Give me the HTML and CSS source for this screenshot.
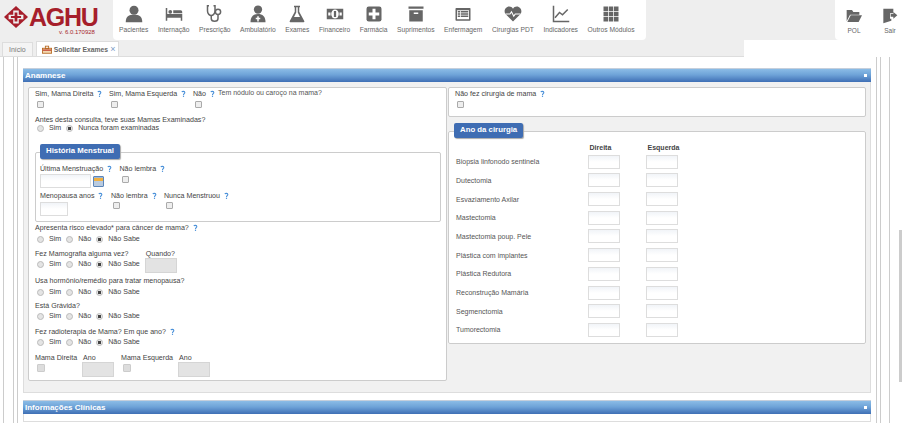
FILE: index.html
```html
<!DOCTYPE html>
<html lang="pt-BR">
<head>
    <meta charset="UTF-8">
    <title>AGHU - Solicitar Exames</title>
    <link rel="stylesheet" href="styles.css">
</head>
<body>
<svg class="sprites" width="0" height="0">
    <symbol id="help" viewBox="0 0 6 9"><path d="M1 2.2C1.6 1 4.6 1 4.6 2.6c0 1.300-1.600 1.400-1.600 3" fill="none" stroke="#4a90d9" stroke-width="1.300"/><rect x="2.300" y="6.500" width="1.400" height="1.500" fill="#4a90d9"/></symbol>
</svg>

<header class="topbar">
    <div class="logo">
        <div class="logo-row">
            <svg class="logo-cross" viewBox="0 0 28 26"><path d="M14 1 27 13 14 25 1 13Z" fill="#a61e2b"/><path d="M11 6h6v4.500h5v5h-5V20h-6v-4.500H6v-5h5Z" fill="#eee"/><path d="M12.500 8h3v4h4v2h-4v4h-3v-4h-4v-2h4Z" fill="#a61e2b"/></svg>
            <span class="logo-name">AGHU</span>
        </div>
        <div class="logo-version">v. 6.0.170928</div>
    </div>
    <nav class="menu">
        <a class="menu-item"><svg viewBox="0 0 24 24"><circle cx="12" cy="7" r="6"/><path d="M1 23c0-8 4-10 11-10s11 2 11 10Z"/></svg>Pacientes</a>
        <a class="menu-item"><svg viewBox="0 0 24 24"><path d="M1 4h2v8h20v9h-2v-4H3v4H1Z"/><circle cx="7" cy="9" r="2.500"/><path d="M11 7h10c1.500 0 2 1 2 4H11Z"/></svg>Internação</a>
        <a class="menu-item"><svg class="line" viewBox="0 0 24 24"><path d="M4 1H2v7c0 4 3 6 5 6s5-2 5-6V1h-2"/><path d="M7 14v4c0 5 9 5 9 0v-5"/><circle cx="16" cy="9" r="3.500"/></svg>Prescrição</a>
        <a class="menu-item"><svg viewBox="0 0 24 24"><circle cx="12" cy="6" r="5.500"/><path d="M2 23c0-8 4-11 10-11s10 3 10 11Z"/><path d="M11 15h2v2h2v2h-2v3h-2v-3H9v-2h2Z" fill="#fff"/></svg>Ambulatório</a>
        <a class="menu-item"><svg viewBox="0 0 24 24"><path d="M8 1h8v2h-1v6l7 13-1 1H3l-1-1 7-13V3H8Z"/><path d="M11 3h2v7l3 6H8l3-6Z" fill="#fff"/></svg>Exames</a>
        <a class="menu-item"><svg viewBox="0 0 24 24"><path d="M1 5h22v14H1Z"/><ellipse cx="12" cy="12" rx="5" ry="6" fill="#fff"/><rect x="10.500" y="8" width="3" height="8"/><rect x="3" y="10" width="3" height="4" fill="#fff"/><rect x="18" y="10" width="3" height="4" fill="#fff"/></svg>Financeiro</a>
        <a class="menu-item"><svg viewBox="0 0 24 24"><rect x="2" y="2" width="20" height="20" rx="3"/><path d="M10 5h4v5h5v4h-5v5h-4v-5H5v-4h5Z" fill="#fff"/></svg>Farmácia</a>
        <a class="menu-item"><svg viewBox="0 0 24 24"><rect x="2" y="2" width="20" height="3"/><rect x="3" y="7" width="18" height="15"/><rect x="9" y="10" width="6" height="2" fill="#fff"/></svg>Suprimentos</a>
        <a class="menu-item"><svg viewBox="0 0 24 24"><rect x="2" y="4" width="20" height="17" rx="1"/><path d="M4 7h16v12H4Z" fill="#fff"/><path d="M5 8h3v2H5Zm4 0h10v2H9Zm-4 3h3v2H5Zm4 0h10v2H9Zm-4 3h3v2H5Zm4 0h10v2H9Z"/></svg>Enfermagem</a>
        <a class="menu-item"><svg viewBox="0 0 24 24"><path d="M12 22 2 12C-1 8 2 2 7 2c2 0 4 1 5 3 1-2 3-3 5-3 5 0 8 6 5 10Z"/><path class="pulse" d="M2 12h6l2-3 3 6 2-3h7"/></svg>Cirurgias PDT</a>
        <a class="menu-item"><svg class="line" viewBox="0 0 24 24"><path d="M2 1v21h21"/><path d="M4 17l6-7 4 3 7-7"/></svg>Indicadores</a>
        <a class="menu-item"><svg viewBox="0 0 24 24"><path d="M2 2h6v6H2Zm7 0h6v6H9Zm7 0h6v6h-6ZM2 9h6v6H2Zm7 0h6v6H9Zm7 0h6v6h-6ZM2 16h6v6H2Zm7 0h6v6H9Zm7 0h6v6h-6Z"/></svg>Outros Módulos</a>
    </nav>
    <nav class="menu menu-right">
        <a class="menu-item"><svg viewBox="0 0 24 24"><path d="M1 3h8l2 3h9v4H6L1 20Z"/><path d="M7 11h17l-5 10H2Z"/></svg>POL</a>
        <a class="menu-item"><svg viewBox="0 0 24 24"><path d="M2 1h15v7h-5v8h2v3L2 23Z"/><path d="M13 9h4V6l6 5-6 5v-3h-4Z"/></svg>Sair</a>
    </nav>
</header>

<div class="tabbar">
    <div class="tab">Início</div>
    <div class="tab tab-active">
        <svg class="tab-icon" viewBox="0 0 12 10"><rect x="0.500" y="3.500" width="11" height="6" fill="#f3d9b0" stroke="#b5651d"/><rect x="4" y="1" width="4" height="3" fill="none" stroke="#b5651d"/><rect x="1" y="5" width="10" height="1.500" fill="#c0392b"/></svg>
        Solicitar Exames <span class="tab-close">×</span>
    </div>
</div>

<div class="page">
    <i class="rule rule-a"></i><i class="rule rule-b"></i><i class="rule rule-c"></i>
    <main class="content">
        <div class="panel-title">Anamnese<i class="panel-dot"></i></div>
        <div class="panel-body">
            <section class="box box-left">
                <div class="row">
                    <div class="field f-74"><label>Sim, Mama Direita <svg class="q"><use href="#help"/></svg></label><span class="check"></span></div>
                    <div class="field f-84"><label>Sim, Mama Esquerda <svg class="q"><use href="#help"/></svg></label><span class="check"></span></div>
                    <div class="field f-25"><label>Não <svg class="q"><use href="#help"/></svg></label><span class="check"></span></div>
                    <span class="note">Tem nódulo ou caroço na mama?</span>
                </div>

                <div class="question q-exam">
                    <label>Antes desta consulta, teve suas Mamas Examinadas?</label>
                    <div class="radios"><span class="radio"></span>Sim <span class="radio on"></span>Nunca foram examinadas</div>
                </div>

                <fieldset class="group group-menstrual">
                    <h3 class="legend">História Menstrual</h3>
                    <div class="row">
                        <div class="field f-80">
                            <label>Última Menstruação <svg class="q"><use href="#help"/></svg></label>
                            <div class="date-line"><span class="input i-52"></span><span class="calendar"></span></div>
                        </div>
                        <div class="field">
                            <label>Não lembra <svg class="q"><use href="#help"/></svg></label>
                            <span class="check check-mid"></span>
                        </div>
                    </div>
                    <div class="row row-meno">
                        <div class="field f-71">
                            <label>Menopausa anos <svg class="q"><use href="#help"/></svg></label>
                            <span class="input i-28"></span>
                        </div>
                        <div class="field f-53"><label>Não lembra <svg class="q"><use href="#help"/></svg></label><span class="check"></span></div>
                        <div class="field"><label>Nunca Menstruou <svg class="q"><use href="#help"/></svg></label><span class="check"></span></div>
                    </div>
                </fieldset>

                <div class="question q-risco">
                    <label>Apresenta risco elevado* para câncer de mama? <svg class="q"><use href="#help"/></svg></label>
                    <div class="radios"><span class="radio"></span>Sim <span class="radio"></span>Não <span class="radio on"></span>Não Sabe</div>
                </div>
                <div class="question-row">
                    <div class="question">
                        <label>Fez Mamografia alguma vez?</label>
                        <div class="radios"><span class="radio"></span>Sim <span class="radio"></span>Não <span class="radio on"></span>Não Sabe</div>
                    </div>
                    <div class="field f-quando"><label>Quando?</label><span class="input i-off i-32"></span></div>
                </div>
                <div class="question q-hormonio">
                    <label>Usa hormônio/remédio para tratar menopausa?</label>
                    <div class="radios"><span class="radio"></span>Sim <span class="radio"></span>Não <span class="radio on"></span>Não Sabe</div>
                </div>
                <div class="question q-gravida">
                    <label>Está Grávida?</label>
                    <div class="radios"><span class="radio"></span>Sim <span class="radio"></span>Não <span class="radio on"></span>Não Sabe</div>
                </div>
                <div class="question q-radio">
                    <label>Fez radioterapia de Mama? Em que ano? <svg class="q"><use href="#help"/></svg></label>
                    <div class="radios"><span class="radio"></span>Sim <span class="radio"></span>Não <span class="radio on"></span>Não Sabe</div>
                </div>
                <div class="row row-anos">
                    <div class="field f-48"><label>Mama Direita</label><span class="check check-off"></span></div>
                    <div class="field f-38"><label>Ano</label><span class="input i-off i-32"></span></div>
                    <div class="field f-58"><label>Mama Esquerda</label><span class="check check-off"></span></div>
                    <div class="field"><label>Ano</label><span class="input i-off i-32"></span></div>
                </div>
            </section>

            <div class="col-right">
                <section class="box box-cirurgia">
                    <label>Não fez cirurgia de mama <svg class="q"><use href="#help"/></svg></label>
                    <span class="check"></span>
                </section>
                <fieldset class="group group-ano">
                    <h3 class="legend">Ano da cirurgia</h3>
                    <div class="ano-grid">
                        <span></span><b>Direita</b><b>Esquerda</b>
                        <span>Biopsia linfonodo sentinela</span><i class="input"></i><i class="input"></i>
                        <span>Dutectomia</span><i class="input"></i><i class="input"></i>
                        <span>Esvaziamento Axilar</span><i class="input"></i><i class="input"></i>
                        <span>Mastectomia</span><i class="input"></i><i class="input"></i>
                        <span>Mastectomia poup. Pele</span><i class="input"></i><i class="input"></i>
                        <span>Plástica com implantes</span><i class="input"></i><i class="input"></i>
                        <span>Plástica Redutora</span><i class="input"></i><i class="input"></i>
                        <span>Reconstrução Mamária</span><i class="input"></i><i class="input"></i>
                        <span>Segmenctomia</span><i class="input"></i><i class="input"></i>
                        <span>Tumorectomia</span><i class="input"></i><i class="input"></i>
                    </div>
                </fieldset>
            </div>
        </div>
        <div class="panel-title panel-second">Informações Clínicas<i class="panel-dot"></i></div>
        <div class="panel-end"></div>
    </main>
    <i class="rule rule-d"></i><i class="rule rule-e"></i><i class="rule rule-f"></i>
    <div class="scrollbar"></div>
</div>
</body>
</html>
```

FILE: styles.css
```css
*{
    margin: 0px;
    padding: 0px;
    box-sizing: border-box;
}
html, body{
    height: 423px;
    overflow: hidden;
}
body{
    background: #fff;
    font-family: "Liberation Sans", Arial, sans-serif;
    font-size: 7.1px;
    color: #444;
}
.sprites{
    position: absolute;
}

/* topo */
.topbar{
    display: flex;
    height: 40px;
    background: #eee;
}
.logo{
    width: 113px;
    padding: 5px 0px 0px 3px;
}
.logo-row{
    display: flex;
    align-items: center;
    height: 24px;
}
.logo-cross{
    width: 26px;
    height: 24px;
}
.logo-name{
    font-size: 25px;
    font-weight: bold;
    color: #a61e2b;
    letter-spacing: -1.3px;
}
.logo-version{
    margin: 0px 0px 0px 56px;
    font-size: 6px;
    color: #a61e2b;
}
.menu{
    display: flex;
    gap: 9.5px;
    width: 533px;
    padding-left: 6px;
    background: #fff;
    border-radius: 0px 0px 4px 4px;
}
.menu-right{
    width: 67px;
    gap: 20px;
    margin-left: auto;
    padding-left: 11px;
    border-radius: 0px 0px 0px 4px;
}
.menu-item{
    display: flex;
    flex: none;
    flex-direction: column;
    align-items: center;
    font-size: 6.7px;
    white-space: nowrap;
    color: #666;
    padding-top: 5px;
}
.menu-item svg{
    width: 18px;
    height: 18px;
    margin-bottom: 3px;
    fill: #666;
}
.menu-item svg.line{
    fill: none;
    stroke: #666;
    stroke-width: 2px;
}
.menu-item .pulse{
    fill: none;
    stroke: #fff;
    stroke-width: 1.5px;
}
.menu-right .menu-item{
    padding-top: 8px;
    font-size: 6.5px;
}
.menu-right .menu-item svg{
    width: 16px;
    height: 16px;
}
.tabbar{
    display: flex;
    align-items: flex-end;
    gap: 3px;
    width: 744px;
    height: 17px;
    padding-left: 2px;
    background: #eee;
    border-bottom: 1px solid #ddd;
}
.tab{
    display: flex;
    align-items: center;
    height: 14px;
    padding: 0px 6px;
    background: #f4f4f4;
    border: 1px solid #ddd;
    border-bottom: 0px;
    font-size: 7px;
    color: #777;
}
.tab-active{
    gap: 2px;
    height: 15px;
    padding: 0px 3px 0px 5px;
    background: #fff;
    font-size: 6.8px;
    font-weight: bold;
    color: #666;
}
.tab-icon{
    width: 10px;
    height: 9px;
}
.tab-close{
    font-weight: normal;
    font-size: 9px;
    color: #7a9cc6;
}

/* area principal */
.page{
    position: relative;
    height: 366px;
    padding: 12px 0px 0px 23px;
    overflow: hidden;
}
.rule{
    position: absolute;
    top: 0px;
    bottom: 0px;
    width: 1px;
    background: #ccc;
}
.rule-a{ left: 3px; }
.rule-b{ left: 13px; }
.rule-c{ left: 17px; }
.rule-d{ left: 876px; }
.rule-e{ left: 880px; }
.rule-f{ left: 889px; }
.scrollbar{
    position: absolute;
    top: 173px;
    right: 0px;
    width: 3px;
    height: 152px;
    background: #ccc;
}
.content{
    width: 848px;
}
.panel-title{
    display: flex;
    align-items: center;
    justify-content: space-between;
    height: 13px;
    padding: 0px 4px 0px 2px;
    background: linear-gradient(#8bbce6, #6ea3d8 45%, #3f6fb5);
    box-shadow: 0px -1px 0px #c5cfdc;
    font-size: 8px;
    font-weight: bold;
    color: #fff;
}
.panel-dot{
    width: 3px;
    height: 3px;
    background: #fff;
}
.panel-body{
    display: flex;
    align-items: flex-start;
    gap: 1px;
    height: 311px;
    padding: 5px 4px 0px 4px;
    background: #f1f1f1;
    border: 1px solid #ddd;
    border-top: 0px;
}
.panel-second{
    margin-top: 8px;
}
.panel-end{
    height: 8px;
    border: 1px solid #ddd;
    border-top: 0px;
}
.box{
    background: #fff;
    border: 1px solid #ccc;
    border-radius: 2px;
}
.box-left{
    width: 420px;
    height: 294px;
    padding: 1px 3px 0px 6px;
}
.col-right{
    width: 419px;
}
.box-cirurgia{
    height: 30px;
    padding: 1px 6px;
}
.box-cirurgia .check{
    display: block;
}
label{
    display: block;
    height: 10px;
    line-height: 10px;
    white-space: nowrap;
}
.q{
    width: 5px;
    height: 8px;
    margin-left: 2px;
    vertical-align: -2px;
}
.row{
    display: flex;
}
.field{
    display: flex;
    flex-direction: column;
    align-items: flex-start;
}
.f-74{ width: 74px; }
.f-84{ width: 84px; }
.f-25{ width: 25px; }
.f-80{ width: 79.5px; }
.f-71{ width: 71px; }
.f-53{ width: 53px; }
.f-48{ width: 48px; }
.f-38{ width: 38px; }
.f-58{ width: 58px; }
.note{
    font-size: 7px;
    line-height: 8px;
    color: #555;
}
.check{
    display: inline-block;
    flex: none;
    width: 7px;
    height: 7px;
    margin: 2px 0px 0px 2px;
    background: #eee;
    border: 1px solid #aaa;
    border-radius: 1px;
}
.check-off{
    width: 8px;
    height: 8px;
    margin: 1px 0px 0px 2px;
    background: #ddd;
    border-color: #ccc;
}
.radios{
    display: flex;
    align-items: center;
    gap: 3px;
    height: 10px;
    padding-left: 2px;
}
.radio{
    width: 7px;
    height: 7px;
    margin: 0px 2px;
    background: #e4e4e4;
    border: 1px solid #bbb;
    border-radius: 50%;
}
.radio:first-child{
    margin-left: 0px;
}
.radio.on{
    background: radial-gradient(#444 0px, #444 1.5px, #e8e8e8 2px);
}
.q-exam{ margin-top: 7px; }
.q-exam .radios{ margin-top: -2px; }
.group{
    position: relative;
    border: 1px solid #ccc;
    border-radius: 2px;
    background: #fff;
}
.legend{
    position: absolute;
    top: -9px;
    left: 4px;
    height: 15px;
    padding: 0px 6px;
    line-height: 13px;
    background: #3f6db3;
    border-radius: 2px;
    box-shadow: 1px 1px 1px #aaa;
    font-size: 7.8px;
    color: #fff;
}
.group-menstrual{
    height: 70px;
    margin: 19px 2px 0px 0px;
    padding: 11px 0px 0px 4px;
}
.input{
    display: block;
    height: 14px;
    background: linear-gradient(#f1f4f8, #fff 50%);
    border: 1px solid #ddd;
}
.i-52{ width: 51px; }
.i-28{ width: 28px; }
.i-32{ width: 32px; }
.i-off{
    height: 15px;
    margin-top: -1px;
    background: #e3e3e3;
    border-color: #d5d5d5;
}
.date-line{
    display: flex;
    gap: 2px;
}
.date-line .calendar{
    width: 11px;
    height: 11px;
    margin-top: 2px;
    background: linear-gradient(#9db8d8 15%, #f0b040 15%, #f0b040 45%, #b9cbe0 45%);
    border: 1px solid #5c85b8;
    border-radius: 1px;
}
.check-mid{
    margin-top: 2px;
}
.row-meno{
    margin-top: 3px;
}
.row-meno .input{
    margin-top: 1px;
}
.row-meno .check{
    margin-top: 1px;
}
.q-risco{ margin-top: 1px; }
.q-risco .radios{ margin-top: 1px; }
.question-row{
    display: flex;
    gap: 5px;
    margin-top: 5px;
}
.f-quando label{
    margin-left: 1px;
}
.q-hormonio{ margin-top: 3px; }
.q-hormonio .radios{ margin-top: 1px; }
.q-gravida{ margin-top: 4px; }
.q-radio{ margin-top: 6px; }
.row-anos{
    margin-top: 6px;
}
.row-anos .input{
    margin-left: -1px;
}
.group-ano{
    height: 213px;
    margin-top: 14px;
    padding: 10px 0px 0px 7px;
}
.group-ano .legend{
    left: 5px;
}
.ano-grid{
    display: grid;
    grid-template-columns: 131.5px 58px 32px;
    grid-template-rows: 8px;
    grid-auto-rows: 14px;
    row-gap: 4.7px;
    align-items: center;
    font-size: 7px;
    color: #555;
}
.ano-grid b{
    padding-left: 2px;
    color: #444;
}
.ano-grid .input{
    width: 32px;
}
.ano-grid > :nth-child(-n+3){
    height: 12px;
    line-height: 12px;
    align-self: start;
    white-space: nowrap;
}
```
